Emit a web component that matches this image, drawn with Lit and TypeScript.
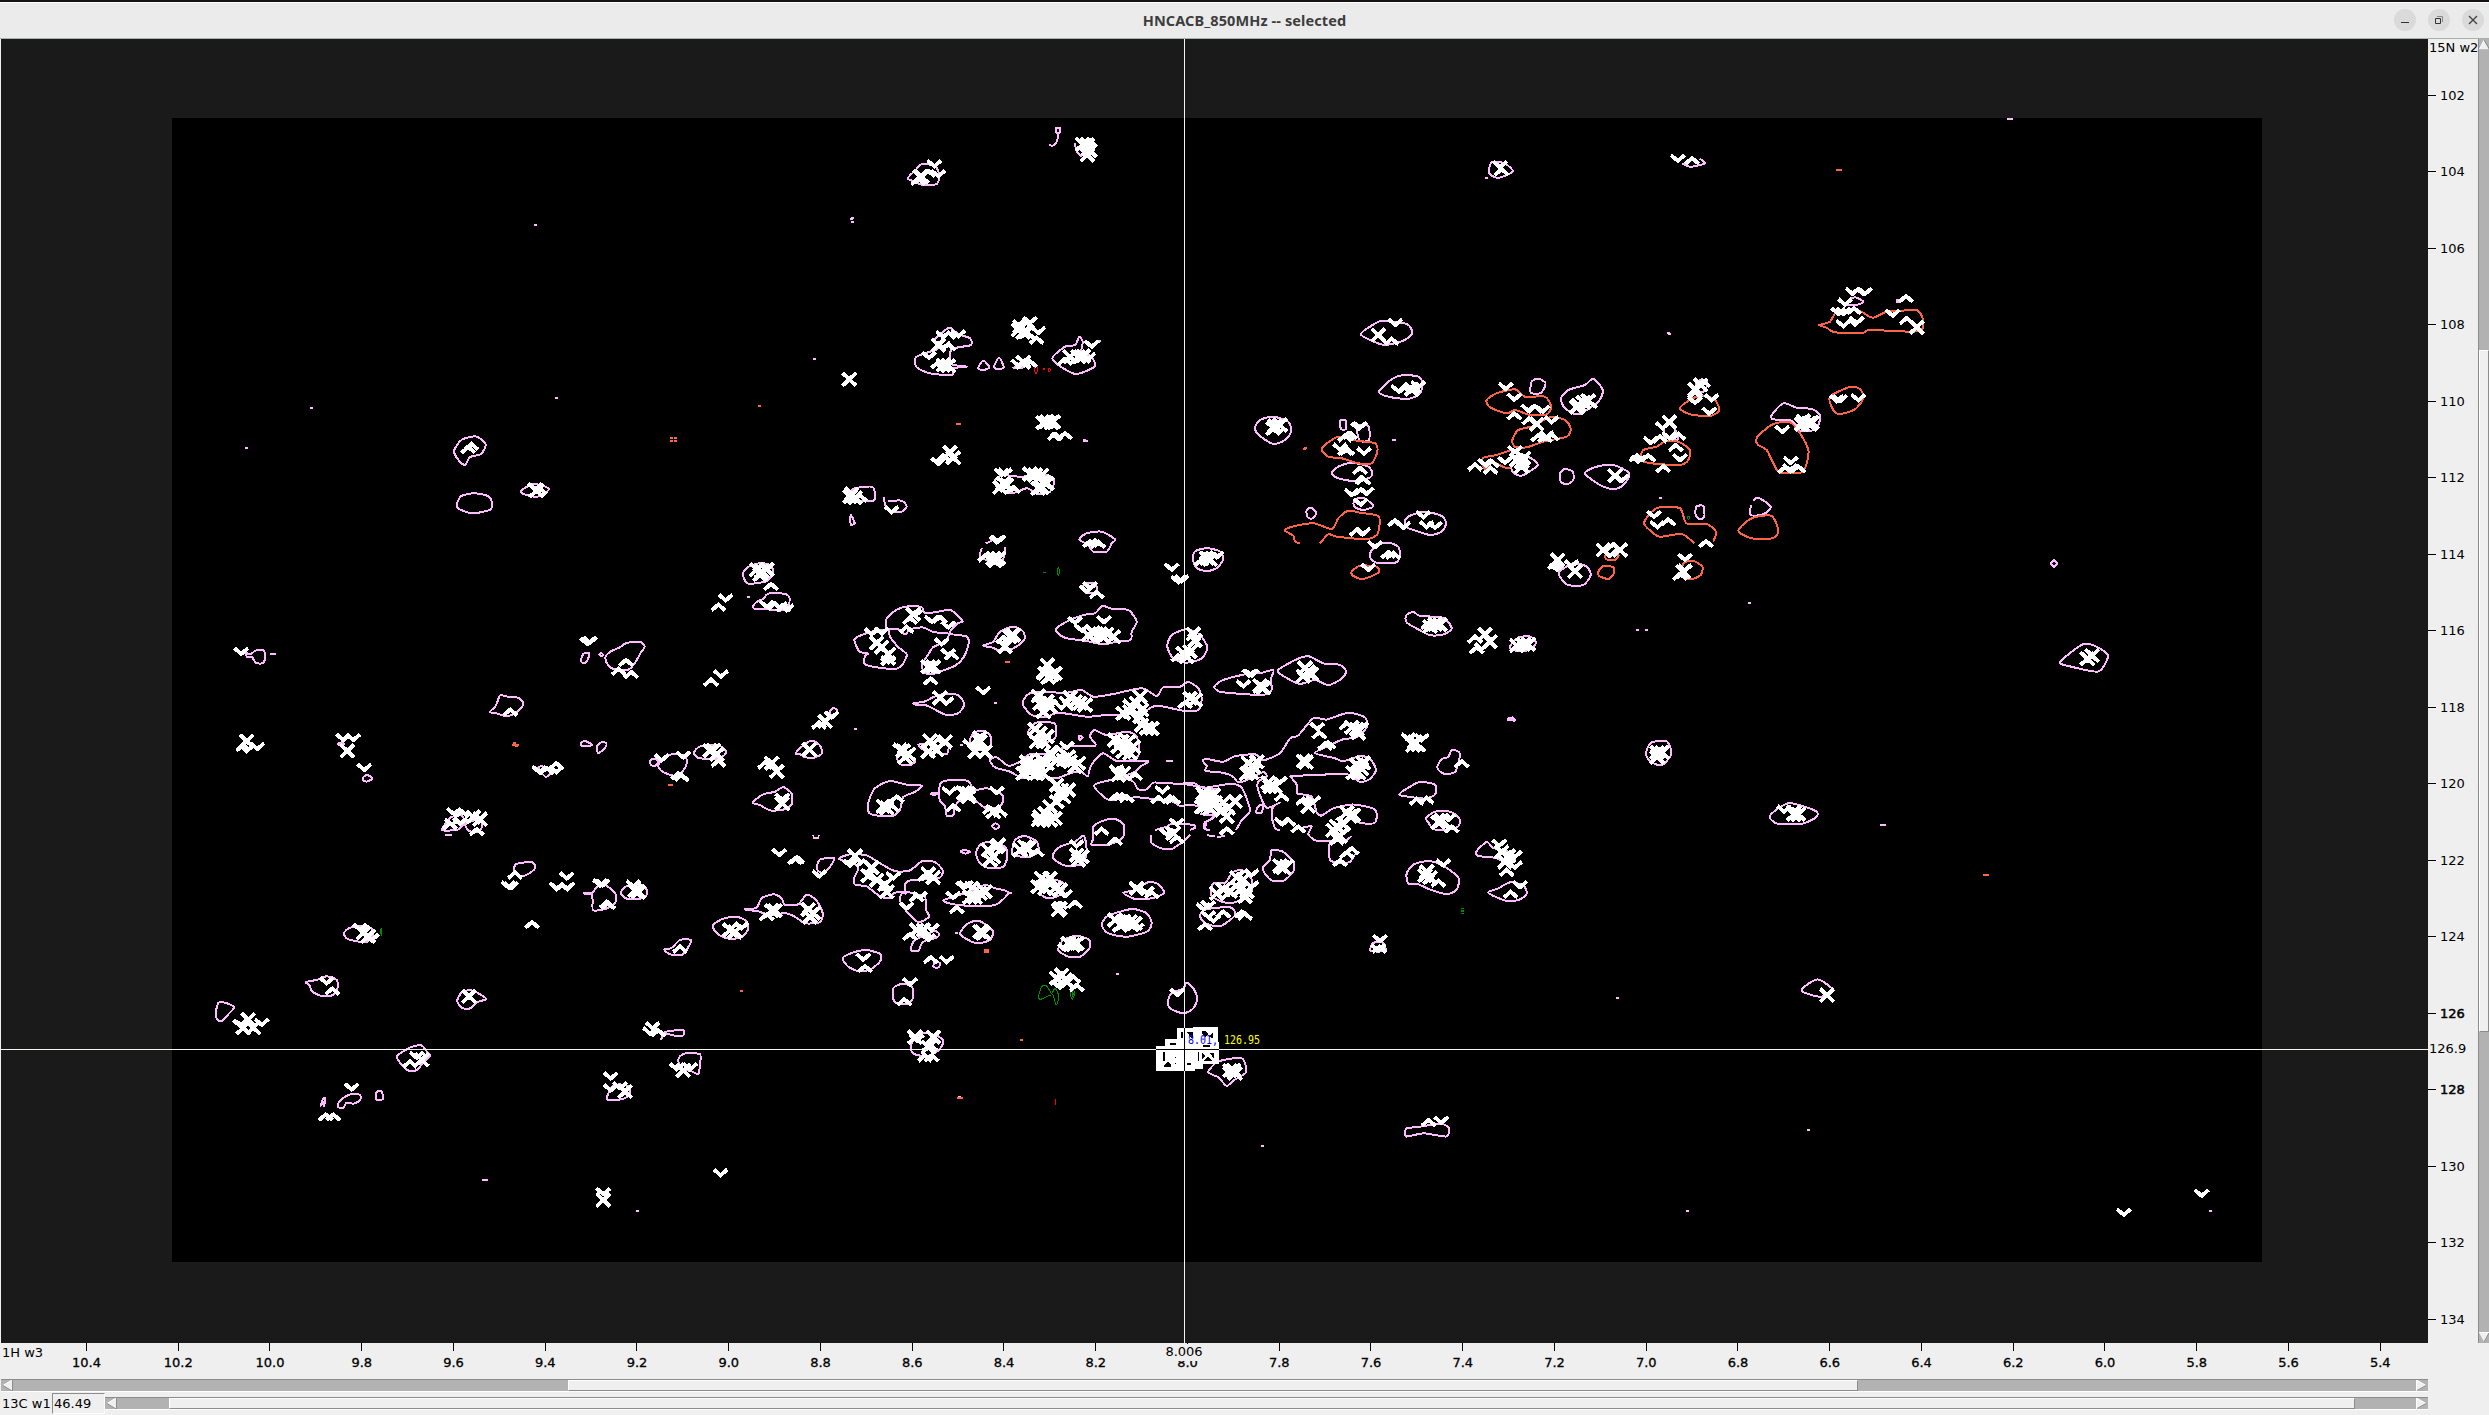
import { LitElement, html, css, svg } from "lit";
import { customElement, property } from "lit/decorators.js";

type Pt = [number, number];

/** One area of the spectrum: origin and units per pixel, then its contours and peak marks. */
interface Tile {
  o: Pt;
  s: Pt;
  pink?: string[];
  orange?: string[];
  green?: string[];
  red?: string[];
  dots?: string;
  odots?: string;
  gdots?: string;
  v?: string;
  a?: string;
  x?: string;
}

const TILES: Tile[] = [
  {
    o: [150, 500], s: [3, 2.24],
    pink: [
      "920,15 932,-8 970,-15 1010,-10 1024,0 1024,20 1000,26 970,30 945,26",
      "286,342 300,346 318,337 340,337 345,348 340,365 318,365 306,352 292,352",
      "1296,350 1305,342 1318,344 1312,360 1302,366 1294,362",
      "1348,346 1354,343 1360,347 1354,350",
      "1367,350 1385,338 1410,330 1430,320 1470,318 1484,328 1470,345 1455,365 1435,380 1390,378 1370,365",
      "1020,475 1038,460 1050,438 1075,441 1105,443 1120,456 1105,472 1085,482 1060,483 1040,478",
      "1292,544 1305,540 1325,547 1320,551 1295,551",
      "1340,553 1355,542 1369,545 1365,555 1345,567",
      "563,547 575,543 583,547 575,551",
      "638,623 650,616 667,623 655,630 642,629",
      "1165,600 1180,597 1205,607 1187,620",
      "878,740 882,730 900,712 930,705 945,720 925,738",
      "948,725 990,715 997,730 985,742 960,742 950,735",
      "1092,825 1100,815 1145,811 1156,823 1140,835 1115,843 1095,832",
      "1303,880 1323,880 1323,882 1303,882",
      "1325,882 1345,865 1365,862 1395,880 1397,900 1370,915 1330,919 1328,895",
      "1412,880 1430,865 1475,862 1490,873 1488,888 1470,893 1430,893",
      "582,970 600,958 640,955 665,960 670,975 650,990 610,987 590,982",
      "468,1080 500,1075 530,1067 560,1075 562,1095 545,1110 510,1110 485,1100 480,1088",
      "197,1150 205,1127 225,1126 252,1136 235,1152 215,1167 202,1163",
      "922,1120 935,1103 960,1098 985,1105 1008,1118 980,1125 965,1137 945,1140 928,1132",
      "740,1247 760,1235 785,1225 815,1222 830,1235 840,1245 820,1260 800,1277 775,1278 755,1265",
      "512,1357 520,1340 526,1340 522,1357 518,1348",
      "563,1355 575,1342 605,1330 630,1333 630,1345 610,1352 590,1350 580,1361 567,1361",
      "677,1330 685,1324 696,1326 698,1342 680,1344",
      "1370,1340 1385,1315 1410,1309 1440,1315 1435,1335 1405,1344 1380,1344",
    ],
    dots: "362,346 367,346 372,346 889,750 894,750 899,750 999,1523 1004,1523 1009,1523",
    odots: "1088,548 1092,548 1097,548 1102,548 1092,545 1098,551",
    green: ["692,964 694,960 694,976"],
    v: "274,347 1312,325 1320,322 290,565 322,560 580,540 610,540 643,607 1168,612 1219,612 912,706 905,730 930,728 1075,870 1083,872 1250,850 1220,873 1252,873 1350,866 1358,866 1450,868 630,965 665,988 530,1085 335,1178 270,1180 800,1252 605,1323 1382,1298 1382,1325 1410,1320",
    a: "280,546 1190,598 1219,587 935,695 900,722 980,735 1095,832 1236,860 1370,898 1375,900 1146,943 547,1092 780,1255 527,1374 550,1374 1428,356 1406,376 1444,383 1081,467",
    x: "290,540 592,562 970,710 990,715 1455,875 1465,878 640,970 655,977 957,1112 295,1164 280,1182 310,1182 815,1254 1425,1325",
  },
  {
    o: [620, 540], s: [3, 2.8],
    pink: [
      "368,95 385,75 420,65 450,70 460,90 440,115 400,122 380,120",
      "400,185 412,172 430,165 445,150 490,150 508,160 505,185 480,198 440,193 405,193",
      "797,240 800,220 830,195 870,185 905,188 915,205 960,200 990,195 1010,210 1028,228 1010,235 990,262 1040,270 1045,295 1030,330 1005,352 970,365 940,375 915,372 905,350 925,320 940,300 975,285 985,262 940,258 910,245 870,250 855,265 835,250 808,250 810,270 835,300 860,320 850,345 830,360 780,358 735,348 735,325 745,318 718,312 703,280 720,268 760,255 797,250",
      "882,457 915,452 940,440 975,430 1015,435 1033,460 1015,485 980,490 945,475 915,462 885,461",
      "630,480 640,470 652,478 645,490 632,488",
      "527,597 550,575 575,562 600,575 606,598 580,610 555,608 540,600",
      "90,620 100,612 115,620 105,632 93,630",
      "115,630 130,610 165,598 195,605 200,625 190,645 165,660 130,650 118,640",
      "222,595 240,578 290,573 318,590 310,605 280,613 235,610",
      "398,735 430,712 465,705 490,692 515,710 515,740 490,755 450,757 420,742",
      "745,760 745,735 765,695 810,675 860,685 905,688 885,705 850,720 840,755 815,773 760,770",
      "895,573 930,570 960,560 985,575 980,600 950,595 915,590",
      "832,610 850,600 885,618 870,630 840,628",
      "932,710 955,708 945,714",
      "958,710 962,680 1000,671 1045,675 1062,700 1100,695 1140,708 1150,725 1140,745 1100,752 1065,728 1050,715 1025,725 1005,745 1000,770 980,772 975,745 960,730",
      "590,920 600,895 640,890 640,900 625,920 605,932",
      "657,893 690,880 740,883 780,905 825,927 870,925 905,900 945,902 968,925 960,945 920,950 870,953 855,965 857,990 845,985 820,990 810,1003 780,998 740,970 705,965 703,945 715,920 700,905",
      "845,990 840,1010 860,1040 895,1070 927,1055 918,1035 915,1000 880,990 860,985",
      "378,1033 410,1030 425,1003 460,992 485,1003 495,1022 535,1020 560,993 590,1010 608,1045 600,1070 555,1073 525,1055 495,1045 450,1050 415,1040 378,1035",
      "278,1080 310,1060 350,1055 380,1068 384,1090 365,1112 330,1117 295,1105",
      "133,1147 155,1142 180,1120 212,1120 205,1140 185,1162 150,1160",
      "668,1170 700,1155 740,1148 782,1160 780,1180 755,1200 720,1208 685,1195",
      "820,1285 820,1255 845,1243 875,1250 880,1280 865,1298 830,1297",
      "873,1150 880,1125 905,1110 945,1095 958,1105 945,1115 920,1120 905,1130 895,1150",
      "940,1195 945,1180 960,1185 955,1197",
      "133,1378 188,1372 190,1387 160,1387",
      "175,1460 180,1445 200,1437 240,1440 240,1465 235,1495 215,1488 185,1480",
      "872,1425 880,1400 915,1380 955,1390 970,1405 955,1430 920,1445 885,1440",
      "970,1010 1005,997 1050,985 1095,966 1125,975 1165,987 1125,1022 1040,1024 1000,1020",
      "1022,872 1035,868 1050,873 1035,878",
      "o 580,826 582,834 594,834 596,826",
      "o 123,1400 130,1382",
    ],
    dots: "383,160 706,528 1022,573 1007,1101",
    odots: "148,687 152,687 362,1263 1014,1562 1019,1562 1024,1562",
    v: "317,172 440,190 480,195 500,200 885,215 935,232 985,248 755,267 785,265 805,345 965,295 985,325 303,385 980,460 635,500 840,590 280,590 125,620 190,612 487,730 988,712 478,885 598,945 690,915 820,950 860,1035 900,1005 365,1090 925,1123 935,1095 980,1185 730,1178 870,1247 890,1405 98,1370 90,1385 170,1485 210,1485 1038,975 1000,1005",
    a: "453,120 295,178 465,175 490,180 860,240 870,215 960,212 805,330 995,315 932,385 273,388 597,508 955,555 295,615 175,650 185,655 435,620 830,715 815,740 1000,740 525,888 532,885 730,895 915,935 890,992 440,1045 180,1135 870,1100 932,1165 735,1190 853,1283 930,1410 915,1440 935,1440 115,1370 1010,1025",
    x: "425,88 410,83 440,83 420,97 880,208 770,288 785,300 805,320 925,355 940,355 960,442 615,508 568,587 850,590 865,600 855,608 930,562 975,565 925,592 950,588 270,590 290,600 455,625 470,648 487,738 790,745 800,750 1030,708 1045,710 705,885 755,917 745,940 770,952 795,965 800,985 925,935 940,945 455,1038 465,1038 565,1035 580,1045 570,1055 330,1092 345,1097 890,1092 910,1092 885,1392 940,1392 925,1420 190,1485 1065,1000 1050,1000",
  },
  {
    o: [960, 560], s: [3, 3],
    pink: [
      "70,257 100,245 120,215 160,200 190,215 192,240 160,265 120,272 95,262",
      "366,85 375,70 395,68 410,80 410,95 380,100",
      "288,208 320,185 370,165 405,160 428,138 460,148 505,150 530,185 515,215 512,240 470,245 430,253 380,243 320,235 300,225",
      "622,260 635,225 680,208 720,225 742,262 725,295 680,308 640,295",
      "188,430 215,398 320,398 365,390 400,410 460,402 545,385 590,408 610,382 660,380 685,366 715,385 725,415 715,450 670,452 590,437 550,455 480,465 430,466 380,470 295,458 260,470 215,465",
      "205,520 225,490 250,485 285,492 287,530 260,545",
      "90,600 110,592 145,617 180,605 210,582 270,580 320,560 405,557 390,530 403,510 440,525 500,515 530,530 538,580 515,600 470,603 430,580 405,600 390,625 383,648 360,635 330,640 290,655 250,650 190,655 150,635 105,622",
      "o 470,603 563,603 540,620 525,635 485,652",
      "o 780,690 720,680 670,672 620,670 580,668 560,688 535,688 520,665 490,655 430,665 402,677 425,705 450,720 530,712 600,720 640,725 660,738 700,735 760,760 755,775 740,785 735,805",
      "357,527 368,532 358,540",
      "96,798 107,790 118,798 107,808",
      "395,855 400,835 400,800 430,782 465,777 492,795 490,830 470,845 440,855",
      "o 572,825 575,850 610,867 640,865 680,835 690,825",
      "o 585,810 620,800 640,790 700,795 705,803 690,810",
      "48,880 60,855 90,845 135,860 142,890 130,920 90,925 60,910",
      "155,880 165,840 195,828 230,845 235,875 210,890 165,888",
      "278,885 300,860 345,845 372,827 380,880 365,912 320,918 285,900",
      "240,1000 250,960 290,960 315,975 300,1005 265,1015",
      "490,998 530,990 560,968 590,970 613,998 575,1015 525,1017",
      "425,1095 440,1070 480,1055 520,1047 560,1060 575,1090 560,1115 500,1130 445,1120",
      "0,1120 25,1090 55,1082 85,1100 100,1115 90,1140 55,1150 25,1140",
      "295,1170 310,1140 350,1127 388,1140 388,1165 360,1190 325,1190",
      "625,1320 635,1300 670,1285 680,1268 700,1285 712,1315 700,1345 670,1360 630,1345",
      "30,545 40,520 65,512 90,525 92,560 60,570",
    ],
    dots: "105,430 470,1242 622,602 628,602 634,602 150,998",
    odots: "139,307 145,307 74,1170 82,1170 74,1176 82,1176",
    gdots: "251,35",
    green: [
      "295,22 299,35 295,46 291,35",
      "235,1310 245,1280 260,1278 275,1300 285,1285 297,1310 288,1335 278,1305 250,1315 240,1318",
      "337,1285 344,1300 337,1318 331,1302",
      "337,1293 340,1302 337,1310",
    ],
    v: "30,560 60,535 380,98 390,88 345,192 432,190 365,215 635,32 655,70 665,67 70,402 510,440 320,567 470,637 607,700 110,702 350,862 650,797 620,827 315,1012 530,990 560,1002 490,1085 530,1112 315,1172 300,1287 652,1308 10,987 35,987",
    a: "130,228 410,93 655,283 250,335 280,420 675,423 290,558 525,638 470,700 485,700 500,705 595,708 630,706 640,710 90,740 120,748 230,868 425,803 465,833 650,828 345,1022 300,1025 575,993 340,1247 350,1272 40,1000",
    x: "60,545 45,575 75,575 150,230 160,225 135,260 400,218 420,222 440,222 460,230 385,225 430,230 700,222 705,242 670,280 690,275 680,290 262,315 255,340 275,345 285,340 265,352 235,408 240,430 260,425 250,455 270,440 330,412 345,425 320,430 360,430 375,435 540,410 530,430 510,455 490,460 545,450 540,470 560,505 575,505 545,495 690,415 705,420 225,508 240,520 260,530 230,545 250,545 465,540 485,545 505,545 520,560 490,575 475,560 510,580 200,605 220,610 240,620 210,635 190,640 230,640 250,640 260,610 200,620 245,600 290,600 310,600 330,605 345,620 355,610 325,590 275,585 490,640 475,645 290,675 305,690 325,690 310,710 290,725 270,740 255,760 240,770 270,780 250,780 300,700 285,775 235,780 730,700 745,710 760,705 740,735 725,740 760,735 15,700 25,710 100,755 110,860 85,870 100,890 90,900 115,855 195,860 205,865 180,870 350,885 365,890 355,900 640,820 245,955 270,955 235,980 255,985 285,985 300,990 300,1045 295,1050 530,985 465,1080 490,1090 510,1085 525,1090 480,1095 65,1115 60,1115 70,1120 325,1150 340,1155 350,1150 305,1245 290,1255 315,1260 60,1000 75,995",
  },
  {
    o: [1180, 500], s: [3, 2.529],
    pink: [
      "38,150 45,130 80,122 120,130 130,150 110,172 80,180 50,172",
      "680,310 678,292 700,283 720,293 790,298 815,325 790,340 750,342 710,325",
      "990,370 1015,348 1050,345 1068,362 1045,380 1000,380",
      "103,472 130,455 200,440 240,438 280,430 272,455 275,480 250,493 180,490 120,485",
      "293,432 345,405 385,395 430,413 480,417 498,433 485,452 445,468 405,455 360,465 320,450",
      "o 330,698 420,695 500,693 540,713 570,705 588,682 570,655 540,648 490,660 460,652 405,640 450,620 490,605 530,600 560,575 555,550 505,538 440,555 400,552 355,595 330,603 300,640 250,658 225,643 165,648 130,662 80,655 68,660 80,672 78,685 130,690 160,700 175,714 210,705 250,688 260,700 235,712 235,735 260,778 300,765 280,775 275,800 285,830 300,835",
      "o 330,698 350,720 352,742 395,750 410,790 425,798 460,780 520,770 585,783 586,815 550,818 520,810",
      "o 360,830 395,825 385,845 410,862 470,862",
      "o 447,870 450,910 480,918 510,915 525,895",
      "o 500,860 515,850",
      "228,790 235,775 250,770 245,790",
      "o 0,718 40,715 70,728 150,718 185,728 210,785 185,810 168,835",
      "o 60,795 100,797 100,805 75,815 72,830 90,836",
      "o 80,848 105,850", "o 112,852 135,850",
      "772,675 785,655 805,650 815,632 838,638 838,655 825,688 795,693 778,685",
      "657,745 690,725 720,713 765,720 765,745 735,755 700,752",
      "738,805 765,788 810,788 838,805 835,825 800,835 760,832 745,815",
      "890,888 920,865 940,880 985,890 1005,910 975,915 945,905 895,900",
      "925,992 955,982 990,967 1030,975 1040,995 1020,1010 985,1015 950,1005",
      "680,945 700,922 745,913 790,925 835,955 830,985 800,997 750,985 715,972 685,970",
      "248,930 270,910 275,885 310,890 340,915 340,940 310,963 275,962 255,945",
      "92,995 100,970 135,968 160,940 190,937 215,960 210,1000 150,1020 105,1008",
      "60,1050 80,1035 150,1030 165,1050 120,1078 75,1070",
      "572,1140 580,1120 610,1120 615,1140",
      "985,557 995,550 1005,557",
      "85,1447 115,1420 185,1412 198,1447 160,1468 140,1482 115,1460",
    ],
    gdots: "846,1032 847,1037 845,1040 847,1044",
    v: "110,148 905,380 208,447 215,447 190,474 412,582 545,580 300,718 400,767 305,822 685,608 725,610 805,812 958,877 1005,905 1005,932 1020,982 790,927 320,928 215,952 215,982 85,1032 100,1068 70,1038 85,1058 600,1118 595,1142 150,1452",
    a: "80,132 65,148 745,308 885,343 890,370 418,585 435,613 445,610 500,562 535,588 305,743 370,753 325,806 355,823 140,828 515,878 480,908 500,888 715,618 845,658 710,753 740,750 815,823 980,933 992,988 775,960 130,1038 75,1070 185,1038 195,1043 598,1127",
    x: "80,147 90,150 765,314 750,320 780,315 915,340 930,358 1010,368 1030,365 1045,365 240,470 250,475 375,425 385,435 370,445 395,440 515,575 530,580 370,660 378,663 530,670 545,680 520,690 550,665 535,690 205,665 220,675 230,662 200,692 215,690 265,715 285,725 270,725 385,775 75,750 70,775 90,780 105,765 130,765 145,780 165,762 140,800 125,785 500,790 510,800 470,825 490,820 460,835 480,850 470,855 520,797 705,612 700,620 785,810 775,815 965,890 985,900 975,915 740,940 735,950 750,955 300,925 310,930 170,955 190,960 130,985 150,990 180,985 200,990 110,995 195,1003 150,1443 165,1450 160,1442",
  },
  {
    o: [820, 110], s: [3, 3],
    pink: [
      "708,54 720,54 720,68 708,68",
      "o 714,70 712,90 702,106 688,106",
      "o 765,100 770,125 785,140",
      "263,205 285,182 305,163 345,168 358,195 350,222 310,226 285,215",
      "343,690 370,665 390,653 415,672 450,685 453,705 415,712 392,722 393,762 440,770 400,775 395,795 330,790 290,772 288,742 330,725 355,715",
      "474,775 490,752 508,772 490,780",
      "522,770 537,743 551,772 535,778",
      "697,745 735,710 765,705 778,680 788,695 785,725 815,740 823,770 770,792 730,775",
      "90,1150 105,1135 155,1130 165,1150 160,1172 110,1172",
      "o 193,1160 195,1185 210,1205 245,1205 260,1190 245,1172 205,1173",
      "92,1214 104,1240 92,1243",
      "525,1110 550,1095 600,1100 680,1095 703,1112 690,1145 655,1152 620,1135 575,1150 530,1130",
      "o 497,1300 515,1293",
      "o 555,1310 555,1330 540,1365 510,1355 480,1340 485,1315",
      "778,1288 800,1270 845,1265 885,1288 875,1300 860,1325 820,1325 805,1305",
      "580,773 608,773 600,770",
    ],
    dots: "92,328 96,324 96,336 793,992 799,992 832,694 836,694",
    red: ["643,768 645,785 648,790 652,785 653,768", "688,775 692,780 688,786 685,780", "671,776 673,778 671,780 669,778"],
    odots: "411,943 417,943",
    v: "800,106 343,172 355,202 370,685 415,682 370,717 327,747 630,642 655,672 595,770 815,713 805,750 715,990 355,1065 545,1097 555,1097 215,1210 530,1300 535,1298",
    a: "295,203 325,180 385,665 385,700 355,753 370,748 612,628 650,680 610,750 630,750 735,743 705,968 735,966 370,1033 580,1128 120,1153 495,1333 810,1290 825,1287 835,1292",
    x: "788,103 803,105 806,118 810,122 802,135 305,200 300,200 355,705 370,765 385,767 600,650 620,665 610,667 595,660 610,757 88,808 750,740 775,740 790,738 680,935 700,935 670,938 695,938 390,1027 400,1043 550,1120 560,1125 540,1132 630,1092 645,1095 665,1095 670,1115 680,1120 665,1132 655,1135 95,1152 90,1160 105,1163 520,1345 535,1345 525,1352",
  },
  {
    o: [1260, 300], s: [3, 3],
    orange: [
      "185,445 235,410 290,422 345,430 352,455 335,490 295,490 245,475 205,470",
      "o 180,730 205,703 230,710 320,717 350,705 358,680 355,648 300,638 265,632 235,655 215,687 160,670 90,682 75,692 100,707 105,725 120,730",
      "275,815 300,797 350,800 355,818 310,837 280,828",
      "680,300 710,280 765,268 795,290 855,290 873,320 860,343 810,345 765,330 740,340 690,322",
      "757,420 775,390 820,378 870,352 915,360 932,385 920,410 850,425 800,442 765,440",
      "668,475 710,465 760,450 780,470 745,505 700,487 675,508",
      "1260,323 1310,290 1360,295 1378,330 1350,348 1290,343",
      "1140,475 1150,450 1190,440 1215,425 1255,425 1290,450 1285,480 1260,495 1195,492 1150,485",
      "o 1303,730 1265,702 1200,710 1175,695 1152,670 1175,635 1200,622 1260,625 1280,670 1340,672 1368,695 1360,725",
      "1037,765 1075,765 1065,780 1040,778",
      "1015,815 1030,798 1060,802 1062,820 1045,837 1018,828",
      "1270,790 1300,783 1327,800 1322,825 1295,837 1268,830",
    ],
    pink: [
      "302,103 330,80 365,63 440,72 457,100 430,122 375,135 335,122",
      "357,275 395,238 430,225 475,230 488,250 480,280 445,297 385,290",
      "0,360 40,350 85,365 93,395 75,420 40,432 0,408 -15,385",
      "241,362 258,362 258,387 243,387",
      "290,380 325,378 327,420 300,422",
      "215,520 235,500 275,488 325,500 337,520 325,535 280,543 235,535",
      "283,600 310,593 340,618 310,630 283,620",
      "140,630 155,623 169,640 155,656 142,650",
      "435,660 455,645 495,635 545,648 558,670 545,695 510,705 460,690 437,680",
      "330,760 350,735 385,728 415,740 420,770 405,788 350,788 332,775",
      "812,278 815,245 835,236 856,248 850,270 840,280",
      "903,295 925,270 975,255 1000,236 1028,270 1015,305 955,343 915,325",
      "755,490 800,470 833,495 785,527 758,515",
      "900,520 915,507 938,515 940,540 920,553 902,545",
      "975,520 1010,500 1060,495 1108,520 1090,555 1060,568 1020,555",
      "898,815 940,790 980,800 992,825 970,855 925,855 903,835",
      "1309,620 1330,618 1333,650 1320,658 1307,645",
      "1213,410 1215,375 1235,372 1250,400 1252,420",
      "1308,250 1325,238 1343,250 1330,275 1310,270",
      "1315,245 1330,243 1338,250",
    ],
    green: ["1285,649 1289,653 1285,658 1281,653"],
    dots: "398,421 403,421 1228,102 1201,594",
    odots: "133,446",
    v: "406,78 415,277 475,265 295,390 300,387 240,452 312,464 275,588 320,584 302,617 310,705 430,687 490,655 500,685 525,687 345,745 325,813 737,270 763,302 805,335 848,338 875,370 860,415 765,460 675,498 735,492 1085,545 890,812 935,802 1050,770 1275,783 1275,815 1182,654 1192,685 1135,488 1172,432 1228,418 1208,388 1260,484 1305,312 1355,304 1348,344",
    a: "395,113 435,258 460,256 262,398 270,395 255,403 255,443 262,443 300,500 305,528 310,532 302,565 290,686 405,657 385,753 400,755 825,316 763,337 808,352 835,402 855,405 875,400 695,480 645,490 692,500 990,303 885,786 1060,730 1260,818 1338,720 1225,655 1130,463 1165,463 1200,406 1255,398 1247,432 1210,495 1305,273 1330,240",
    x: "355,105 455,268 45,378 60,375 40,385 830,372 770,480 785,485 785,500 790,475 970,307 955,315 985,302 950,322 1065,527 893,780 945,814 1030,750 1080,750 1270,815 1228,366 1305,268 1322,255",
  },
  {
    o: [1600, 260], s: [3, 3],
    pink: [
      "740,125 765,112 790,125 770,135 745,135",
      "515,465 550,430 590,443 635,447 660,465 655,495 635,512 600,512 575,482 520,478",
      "o 453,735 452,765 490,763 512,740 475,713 460,722",
    ],
    dots: "890,121 895,121 890,126 895,126",
    orange: [
      "658,195 690,185 710,155 760,150 785,155 818,173 865,153 905,152 950,150 968,175 968,205 940,215 810,210 790,218 705,217 680,203",
      "690,410 750,381 780,387 790,415 765,448 720,462 700,450",
      "468,540 480,522 520,492 570,487 600,520 625,570 620,610 605,637 540,638 520,610 500,570 475,555",
      "415,812 455,775 515,768 535,815 515,835 455,835",
    ],
    v: "758,105 795,105 735,137 715,165 730,165 730,202 765,197 770,192 878,170 710,427 720,427 775,424 547,519 572,612 570,634",
    a: "773,85 762,141 918,105 920,171 555,618 595,616",
    x: "950,202 610,483 625,490 635,487 605,493 630,493",
  },
  {
    o: [0, 0], s: [0.63, 0.63],
    pink: [
      "286,284 291,277 300,275 306,280 303,286 296,288 293,293 289,290",
      "328,310 336,305 346,308 338,313",
      "o 1060,103 1065,105 1074,103 1071,100",
      "938,109 940,102 948,103 953,108 944,112",
      "1298,417 1312,406 1320,407 1328,413 1322,423 1305,420",
      "1037,475 1040,468 1050,467 1053,475 1047,482 1040,480",
      "1115,514 1127,506 1144,511 1144,515 1135,519 1120,519",
      "1135,624 1145,617 1155,624 1147,628",
      "1292,355 1294,353 1296,355 1294,357",
      "886,716 886,711 893,710 908,708 913,711 911,716 897,714",
      "950,453 953,452 954,454",
    ],
    dots: "155,282 196,257 337,142 350,251 513,226 683,277 1051,210 1102,380 1037,397 1031,397 1185,520 1187,520 1019,629 1139,712 1063,763 1392,763 1265,75 1267,75 401,763 795,722 604,691 936,112",
    odots: "478,256 423,276 425,276 423,278 425,278 1157,107 1159,107 1250,551 1252,551 643,655 822,282",
    gdots: "921,573",
    v: "1057,102 945,106 454,741 380,753 338,766 1387,754 908,708 337,309 1124,512 1130,512".replace(" 338,766", " 1338,766"),
    a: "297,279 295,281 900,705 1066,99 340,307 946,106",
    x: "1315,415 1318,413 1044,474 1047,474 1044,477 1130,513 1133,513 1151,627 380,756 338,309",
  },
];

const round = (n: number) => Math.round(n * 10) / 10;

function points(src: string, t: Tile): Pt[] {
  return src
    .replace(/^o /, "")
    .split(" ")
    .map((p) => {
      const [x, y] = p.split(",").map(Number);
      return [t.o[0] + x / t.s[0], t.o[1] + y / t.s[1]] as Pt;
    });
}

/** Catmull-Rom curve through a contour's points; a leading "o" leaves it open. */
function contour(src: string, t: Tile): string {
  const open = src.startsWith("o ");
  const p = points(src, t);
  const n = p.length;
  const at = (i: number) => (open ? p[Math.max(0, Math.min(n - 1, i))] : p[(i + n) % n]);
  let d = `M${round(p[0][0])} ${round(p[0][1])}`;
  for (let i = 0; i < (open ? n - 1 : n); i++) {
    const [a, b, c, e] = [at(i - 1), at(i), at(i + 1), at(i + 2)];
    const k = 8;
    d += `C${round(b[0] + (c[0] - a[0]) / k)} ${round(b[1] + (c[1] - a[1]) / k)} ${round(c[0] - (e[0] - b[0]) / k)} ${round(c[1] - (e[1] - b[1]) / k)} ${round(c[0])} ${round(c[1])}`;
  }
  return open ? d : d + "Z";
}

type ColourKey = "pink" | "orange" | "green" | "red";
const contours = (key: ColourKey) =>
  TILES.map((t) => (t[key] ?? []).map((c) => contour(c, t)).join("")).join("");

const dots = (key: "dots" | "odots" | "gdots") =>
  TILES.map((t) =>
    t[key] ? points(t[key]!, t).map(([x, y]) => `M${Math.round(x) - 1} ${Math.round(y)}h2.500`).join("") : ""
  ).join("");

function marks(): string {
  let d = "";
  for (const t of TILES) {
    if (t.v) for (const [x, y] of points(t.v, t)) d += `M${round(x - 6.8)} ${round(y - 6.8)}L${round(x)} ${round(y - 1)}L${round(x + 6.8)} ${round(y - 6.8)}`;
    if (t.a) for (const [x, y] of points(t.a, t)) d += `M${round(x - 6.8)} ${round(y + 6.8)}L${round(x)} ${round(y + 1)}L${round(x + 6.8)} ${round(y + 6.8)}`;
    if (t.x) for (const [x, y] of points(t.x, t)) d += `M${round(x - 6.8)} ${round(y - 6.4)}L${round(x + 6.8)} ${round(y + 6.4)}M${round(x + 6.8)} ${round(y - 6.4)}L${round(x - 6.8)} ${round(y + 6.4)}`;
  }
  return d;
}

@customElement("spectrum-plot")
class SpectrumPlot extends LitElement {
  static styles = css`
    :host { display: block; background: #1a1a1a; overflow: hidden; }
    svg { display: block; }
    .line { fill: none; stroke-width: 2; shape-rendering: crispEdges; }
    .thin { stroke-width: 1; }
    .pink { stroke: #ffbbff; }
    .orange { stroke: #ff6347; }
    .green { stroke: #008b00; }
    .red { stroke: #ff0000; }
    .mark { stroke: #fff; stroke-width: 3.9; }
    .cross { stroke: #f5f5f0; stroke-width: 1; shape-rendering: crispEdges; }
    .coord { font: 10px "DejaVu Sans Mono", monospace; white-space: pre; }
  `;
  render() {
    return html`<svg width="2427" height="1304" viewBox="1 39 2427 1304">
      ${svg`
        <rect x="172" y="118" width="2090" height="1144" fill="#000"></rect>
        <path class="line pink" d=${contours("pink")}></path>
        <path class="line orange" d=${contours("orange")}></path>
        <path class="line thin green" d=${contours("green")}></path>
        <path class="line thin red" d=${contours("red")}></path>
        <path class="line pink" d=${dots("dots")}></path>
        <path class="line orange" d=${dots("odots")}></path>
        <path class="line thin green" d=${dots("gdots")}></path>
        <path class="line thin red" d="M1055.5 1099v6"></path>
        <path class="line mark" d=${marks()}></path>
        <path fill="#fff" shape-rendering="crispEdges" d="M1156 1046h9v-7h12v-11h16v-1h25v15h1v22h-16v5h-8v2h-39z"></path>
        <path fill="#000" shape-rendering="crispEdges" d="M1163 1052h2v9h-2zM1164 1065l4-3 3 3v2h-7zM1170 1043h6v2h-6zM1181 1032h2v6h-2zM1187 1032h6v6h-2zM1202 1031h4l2 3-3 3-3-3zM1208 1037l5-5v6zM1203 1045h7v2h-7zM1198 1052h1v9h-1zM1203 1061l5-5 4 5zM1202 1052l3 4-3 4zM1210 1053h4v6zM1187 1063h4v2h-4zM1175 1057h1v1h-1zM1175 1063h1v1h-1z"></path>
        <path class="cross" d="M1184.5 39V1344M1 1049.5H2428"></path>
        <path d="M1156 1049.5H1219M1184.5 1028V1071" stroke="#000" stroke-width="1" shape-rendering="crispEdges"></path>
        <g transform="translate(1188 1044) scale(1 1.15)">
          <text class="coord" x="0" y="0" fill="#0000ff">8.01,</text>
          <text class="coord" x="36" y="0" fill="#ffff00">126.95</text>
        </g>`}
    </svg>`;
  }
}

@customElement("tk-scrollbar")
class TkScrollbar extends LitElement {
  @property({ type: Boolean, reflect: true }) vertical = false;
  @property({ type: Number }) start = 0;
  @property({ type: Number }) size = 0;
  static styles = css`
    :host { display: flex; box-sizing: border-box; height: 13px; background: #b2b2b2; border-top: 1px solid #8c8c8c; border-bottom: 1px solid #fff; }
    :host([vertical]) { flex-direction: column; width: 11px; height: 1304px; border: 0; border-left: 1px solid #8c8c8c; overflow: hidden; }
    .arrow { flex: none; width: 12px; height: 11px; display: block; }
    .gap { flex: none; }
    .thumb { flex: none; box-sizing: border-box; background: #efefef; border: 1px solid #fff; border-right-color: #8c8c8c; border-bottom-color: #8c8c8c; }
    .spring { flex: 1; }
  `;
  render() {
    const gap = this.vertical ? `height:${this.start}px` : `width:${this.start}px`;
    const thumb = this.vertical ? `height:${this.size}px` : `width:${this.size}px`;
    return this.vertical
      ? html`<svg class="arrow" viewBox="0 0 12 11"><path d="M5 1L10 11H0Z" fill="#efefef"></path><path d="M5 1L0 11" stroke="#fff"></path><path d="M0 11H11L5 1" stroke="#8c8c8c" fill="none"></path></svg>
          <div class="gap" style=${gap}></div><div class="thumb" style=${thumb}></div><div class="spring"></div>
          <svg class="arrow" viewBox="0 0 12 11"><path d="M0 0.5H10L5 10Z" fill="#efefef"></path><path d="M0 .5H11" stroke="#fff"></path><path d="M5 10L10 1" stroke="#8c8c8c"></path></svg>`
      : html`<svg class="arrow" viewBox="0 0 12 11"><path d="M2 5.5L11 0V11Z" fill="#efefef"></path><path d="M2 5.5L11 0" stroke="#fff"></path><path d="M2 5.5L11 11M11.500 0V11" stroke="#8c8c8c"></path></svg>
          <div class="gap" style=${gap}></div><div class="thumb" style=${thumb}></div><div class="spring"></div>
          <svg class="arrow" viewBox="0 0 12 11"><path d="M1 0L10 5.500L1 11Z" fill="#efefef"></path><path d="M.5 11V0L10 5.500" stroke="#fff" fill="none"></path><path d="M10 5.500L1 10.500" stroke="#8c8c8c"></path></svg>`;
  }
}

@customElement("app-root")
class AppRoot extends LitElement {
  static styles = css`
    :host { display: block; width: 2489px; height: 1415px; overflow: hidden; background: #efefef; font: 13px/15px "DejaVu Sans", sans-serif; color: #000; }
    .window { display: grid; grid-template: 39px 1304px 36px 36px / 2428px 50px 11px; height: 1415px; box-sizing: border-box; }
    .title { grid-column: 1 / 4; display: grid; grid-template-columns: 1fr auto 1fr; align-items: center; background: #ebebeb; border-top: 2px solid #161214; border-bottom: 1px solid #a9b0ad; box-shadow: inset 0 1px #fff; box-sizing: border-box; height: 39px; padding-right: 5px; }
    .name { grid-column: 2; font: bold 14.5px/18px "Noto Sans", sans-serif; color: #3d3d3d; letter-spacing: .1px; padding: 0 0 0 5px; }
    .buttons { display: flex; gap: 12px; justify-content: flex-end; }
    .button { width: 22px; height: 22px; border-radius: 50%; background: #dadada; display: block; }
    .plot { margin-left: 1px; }
    .yaxis { position: relative; display: flex; flex-direction: column; box-sizing: border-box; padding-top: 18px; overflow: hidden; white-space: nowrap; }
    .ylabel { position: absolute; left: 1px; top: 1px; }
    .ytick { height: 76.5px; flex: none; display: flex; align-items: center; gap: 4px; }
    .ytick::before { content: ""; width: 8px; height: 1px; background: #000; }
    .heavy { -webkit-text-stroke: .5px #000; }
    .cursor-y { position: absolute; left: 1px; top: 1002px; background: #efefef; }
    .xaxis { position: relative; display: flex; box-sizing: border-box; padding-left: 40.600px; overflow: hidden; }
    .xlabel { position: absolute; left: 2px; top: 2px; }
    .xtick { width: 91.750px; flex: none; display: flex; flex-direction: column; align-items: center; gap: 4px; -webkit-text-stroke: .3px #000; }
    .xtick::before { content: ""; width: 1px; height: 8px; background: #000; }
    .cursor-x { position: absolute; left: 1165px; top: 1px; width: 38px; text-align: center; background: #efefef; height: 17px; line-height: 16px; }
    .scrolls { grid-column: 1; padding-left: 1px; display: flex; flex-direction: column; }
    .corner { grid-column: 2 / 4; }
    .row { display: flex; align-items: flex-start; height: 22px; padding-left: 1px; }
    .entry { box-sizing: border-box; width: 53px; height: 21px; margin-left: 1px; padding: 2px 1px; border: 1px solid; border-color: #8c8c8c #fff #fff #8c8c8c; }
    .row-name { width: 49px; white-space: nowrap; padding-top: 3px; }
    .grow { flex: 1; margin-top: 4px; }
    .first { margin-bottom: 1px; }
  `;
  render() {
    const ys = Array.from({ length: 17 }, (_, i) => 102 + 2 * i);
    const xs = Array.from({ length: 26 }, (_, i) => (10.4 - 0.2 * i).toFixed(1));
    return html`<div class="window">
      <div class="title">
        <div class="name">HNCACB_850MHz -- selected</div>
        <div class="buttons">
          <svg class="button" viewBox="0 0 22 22"><path d="M7 13.500h8" stroke="#333"></path></svg>
          <svg class="button" viewBox="0 0 22 22"><path d="M7.500 9.500h5v5h-5z" fill="none" stroke="#333"></path><path d="M9 7.500h5.500V13" fill="none" stroke="#888"></path></svg>
          <svg class="button" viewBox="0 0 22 22"><path d="M7 7l8 8M15 7l-8 8" stroke="#444" stroke-width="1.400"></path></svg>
        </div>
      </div>
      <spectrum-plot class="plot"></spectrum-plot>
      <div class="yaxis">
        ${ys.map((y) => html`<div class="ytick ${y === 126 || y === 128 ? "heavy" : ""}">${y}</div>`)}
        <span class="ylabel">15N w2</span><span class="cursor-y">126.9</span>
      </div>
      <tk-scrollbar vertical .start=${300} .size=${682}></tk-scrollbar>
      <div class="xaxis">
        ${xs.map((x) => html`<div class="xtick">${x}</div>`)}
        <span class="xlabel">1H w3</span><span class="cursor-x">8.006</span>
      </div>
      <div class="corner"></div>
      <div class="scrolls">
        <tk-scrollbar class="first" .start=${555} .size=${1290}></tk-scrollbar>
        <div class="row"><span class="row-name">13C w1</span><span class="entry">46.49</span>
          <tk-scrollbar class="grow" .start=${52} .size=${2186}></tk-scrollbar></div>
      </div>
      <div class="corner"></div>
    </div>`;
  }
}
